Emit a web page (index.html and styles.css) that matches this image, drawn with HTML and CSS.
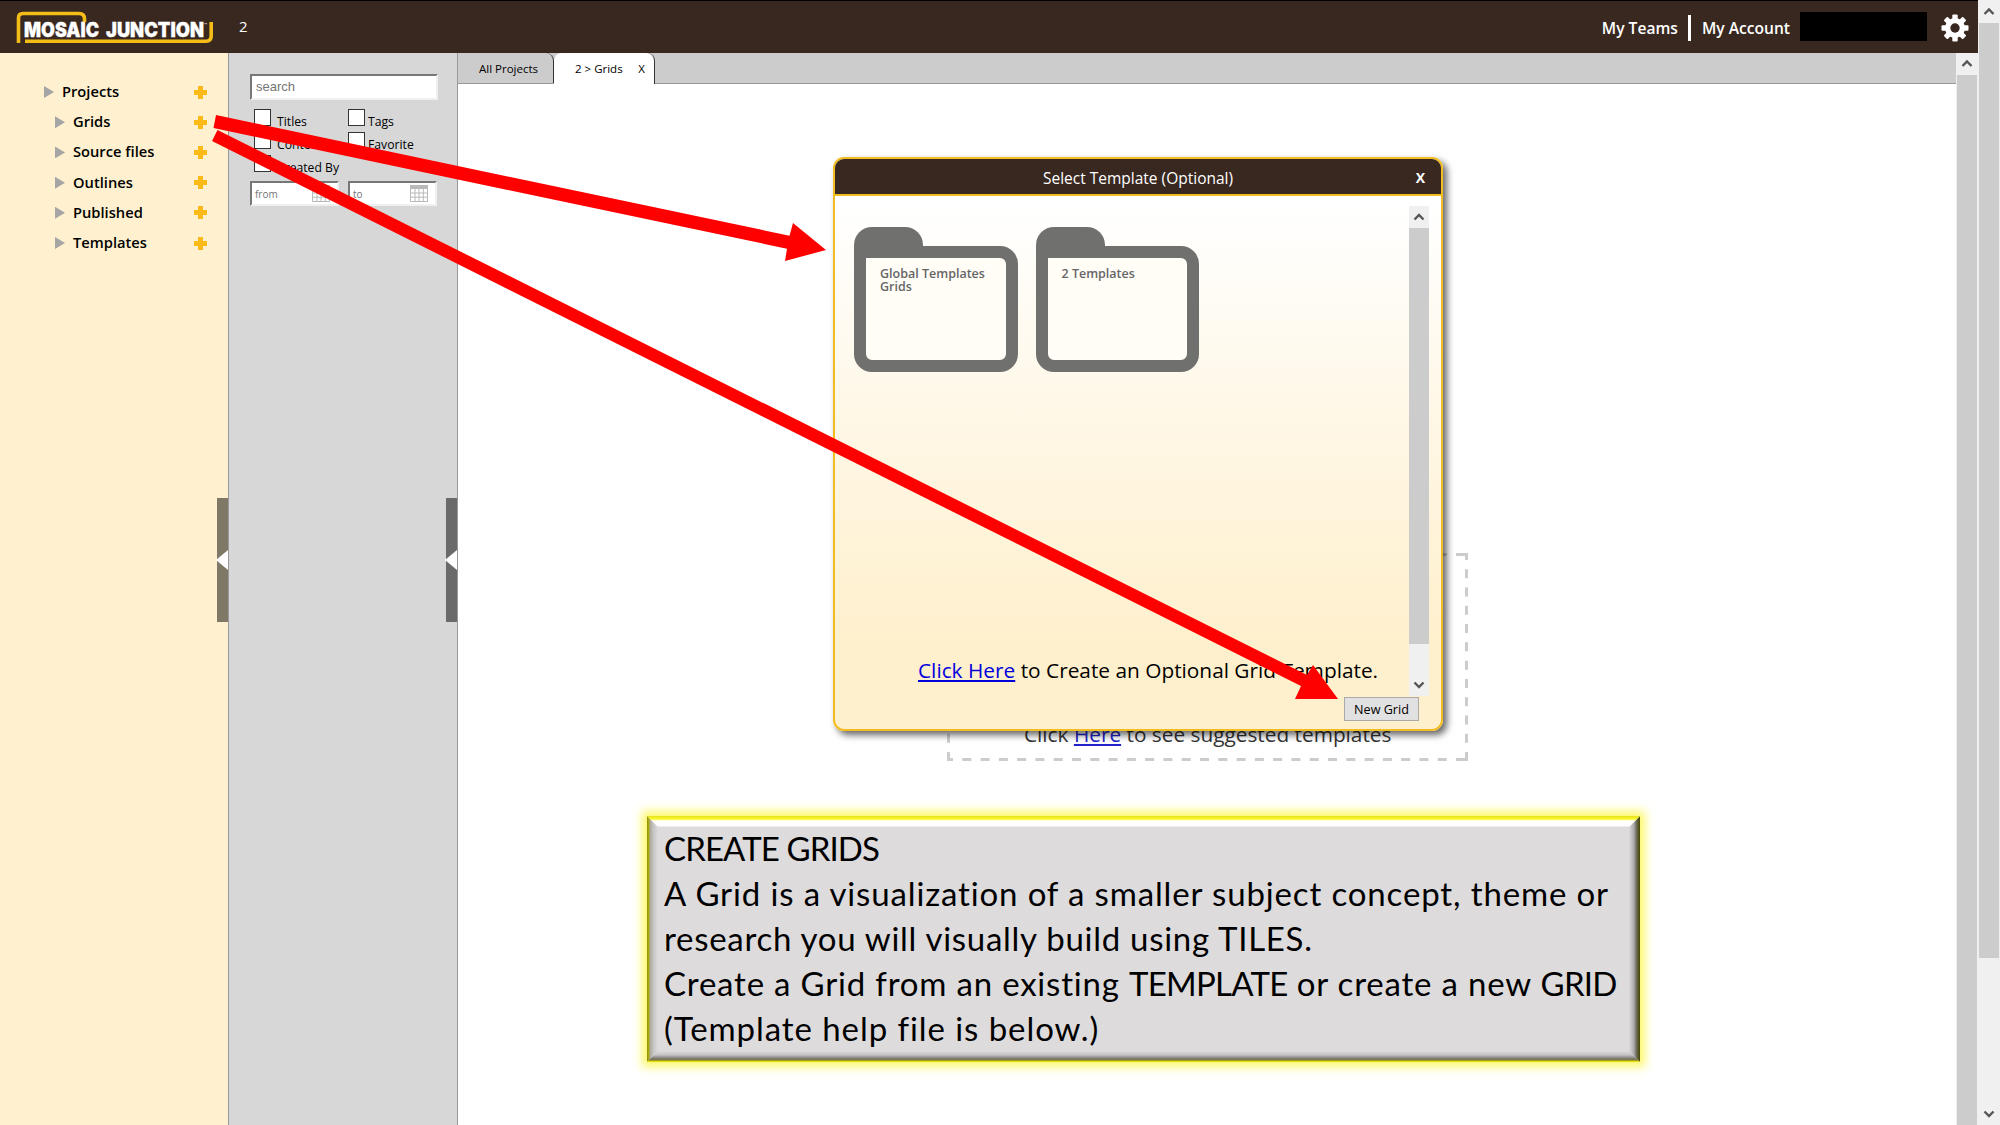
FILE: index.html
```html
<!DOCTYPE html>
<html lang="en">
<head>
<meta charset="utf-8">
<title>Mosaic Junction</title>
<link rel="stylesheet" href="styles.css">
</head>
<body>
<div class="screen">
  <div class="app">
    <header class="header">
      <svg class="logo" width="200" height="34" viewBox="14 10 200 34" role="img">
        <path d="M18.500 43V18Q18.500 13.500 23 13.500H79Q84.500 13.500 84.500 19V22" class="logo-line"/>
        <path d="M25 41.200H206Q211.200 41.200 211.200 36V22" class="logo-line"/>
        <text x="24" y="37" textLength="75" lengthAdjust="spacingAndGlyphs" class="logo-text">MOSAIC</text>
        <text x="106" y="37" textLength="98" lengthAdjust="spacingAndGlyphs" class="logo-text">JUNCTION</text>
        <text x="204" y="27" class="logo-tm">™</text>
      </svg>
      <span class="project">2</span>
      <nav class="account">
        <a class="teams">My Teams</a>
        <i class="divider"></i>
        <a class="acct">My Account</a>
        <i class="redacted"></i>
        <svg class="gear" width="28" height="28" viewBox="-14 -14 28 28">
          <g fill="#fff">
            <rect x="-2.700" y="-13.500" width="5.400" height="27" rx="1"/>
            <rect x="-2.700" y="-13.500" width="5.400" height="27" rx="1" transform="rotate(45)"/>
            <rect x="-2.700" y="-13.500" width="5.400" height="27" rx="1" transform="rotate(90)"/>
            <rect x="-2.700" y="-13.500" width="5.400" height="27" rx="1" transform="rotate(135)"/>
            <circle r="10"/>
          </g>
          <circle r="4.700" fill="#39281f"/>
        </svg>
      </nav>
    </header>
    <div class="body">
      <aside class="sidebar">
        <ul class="tree">
          <li class="root"><i class="tri"></i><span>Projects</span><i class="plus"></i></li>
          <li><i class="tri"></i><span>Grids</span><i class="plus"></i></li>
          <li><i class="tri"></i><span>Source files</span><i class="plus"></i></li>
          <li><i class="tri"></i><span>Outlines</span><i class="plus"></i></li>
          <li><i class="tri"></i><span>Published</span><i class="plus"></i></li>
          <li><i class="tri"></i><span>Templates</span><i class="plus"></i></li>
        </ul>
        <div class="handle"></div>
      </aside>
      <aside class="filters">
        <div class="field search">search</div>
        <div class="checks">
          <label><i class="box"></i>Titles</label><label class="right"><i class="box"></i>Tags</label>
          <label><i class="box"></i>Content</label><label class="right"><i class="box"></i>Favorite</label>
          <label><i class="box"></i>Created By</label>
        </div>
        <div class="dates">
          <div class="field date">from<svg width="18" height="17" viewBox="0 0 18 17"><path d="M.5 3V16.500H17.500V3M5 3V16M9 3V16M13.300 3V16M0 8H18M0 12.200H18" fill="none" stroke="#b9b9b9"/><path d="M0 0H18V4H0Z" fill="#b9b9b9"/></svg></div>
          <div class="field date">to<svg width="18" height="17" viewBox="0 0 18 17"><path d="M.5 3V16.500H17.500V3M5 3V16M9 3V16M13.300 3V16M0 8H18M0 12.200H18" fill="none" stroke="#b9b9b9"/><path d="M0 0H18V4H0Z" fill="#b9b9b9"/></svg></div>
        </div>
        <div class="handle dark"></div>
      </aside>
      <main class="main">
        <div class="tabs">
          <div class="tab first">All Projects</div>
          <div class="tab active"><span>2 &gt; Grids</span><span>X</span></div>
        </div>
        <div class="canvas">
          <section class="dropzone">
            <svg class="dashes" width="521" height="208" viewBox="0 0 521 208">
              <path d="M0 1.500H521M0 206.500H521" stroke-dasharray="9 9.286" stroke-dashoffset="3"/>
              <path d="M1.500 0V208M519.500 0V208" stroke-dasharray="9 9.273" stroke-dashoffset="2"/>
            </svg>
            <p>Click <a>Here</a> to see suggested templates</p>
          </section>
        </div>
      </main>
      <div class="vscroll inner"><svg viewBox="0 0 22 22"><path d="M6.500 13L11 8.500L15.500 13"/></svg><i class="thumb"></i></div>
    </div>
  </div>
  <div class="vscroll outer"><svg viewBox="0 0 22 22"><path d="M6.500 14L11 9.500L15.500 14"/></svg><i class="thumb"></i><svg class="down" viewBox="0 0 22 22"><path d="M6.500 8.500L11 13L15.500 8.500"/></svg></div>

  <div class="modal">
    <div class="modal-head"><span>Select Template (Optional)</span><b>X</b></div>
    <div class="modal-body">
      <div class="list">
        <div class="folders">
          <div class="folder"><i class="folder-tab"></i><div class="folder-card">Global Templates<br>Grids</div></div>
          <div class="folder"><i class="folder-tab"></i><div class="folder-card">2 Templates</div></div>
        </div>
        <p class="hint"><a>Click Here</a> to Create an Optional Grid Template.</p>
      </div>
      <div class="vscroll small"><svg viewBox="0 0 22 22"><path d="M6.500 13.500L11 9L15.500 13.500"/></svg><i class="thumb"></i><svg class="down" viewBox="0 0 22 22"><path d="M6.500 8.500L11 13L15.500 8.500"/></svg></div>
    </div>
    <div class="modal-foot"><div class="btn">New Grid</div></div>
  </div>

  <div class="callout">
    <i class="bevel left"></i><i class="bevel right"></i><i class="bevel top"></i><i class="bevel bottom"></i>
    <p class="l1">CREATE GRIDS</p>
    <p class="l2">A Grid is a visualization of a smaller subject concept, theme or</p>
    <p class="l3">research you will visually build using TILES.</p>
    <p class="l4">Create a Grid from an existing <span class="caps">TEMPLATE</span> or create a new <span class="caps">GRID</span></p>
    <p class="l5">(Template help file is below.)</p>
  </div>

  <svg class="arrows" width="2000" height="1125" viewBox="0 0 2000 1125">
    <path d="M216 115L789.500 235.700L793 223L826 250L785 261L787 248.700L213.500 128Z"/>
    <path d="M217.500 130L1307 675L1313 665L1338 699L1295 699L1301 686L212 141Z"/>
  </svg>
</div>
</body>
</html>
```

FILE: styles.css
```css
* { box-sizing: border-box; }
body { margin: 0; font-family: "Open Sans", "Noto Sans", sans-serif; color: #000; }
p, ul { margin: 0; padding: 0; list-style: none; }
a { text-decoration: none; }
.screen { position: relative; display: flex; width: 2000px; height: 1125px; overflow: hidden; background: #fff; }
.app { display: flex; flex-direction: column; width: 1978px; height: 1125px; }

.header { display: flex; align-items: flex-start; height: 53px; padding: 9px 9px 0 14px; background: #39281f; border-top: 1px solid #000; color: #fff; }
.logo { flex: none; }
.logo-line { fill: none; stroke: #f4bc17; stroke-width: 3.6; }
.logo-text { font: 900 19.500px "Inter", sans-serif; fill: #fff; stroke: #fff; stroke-width: .3; }
.logo-tm { font: 5px "Inter", sans-serif; fill: #fff; }
.project { margin: 5px 0 0 25px; font-size: 15px; line-height: 22px; }
.account { display: flex; align-items: center; margin-left: auto; height: 35px; font-size: 15.600px; font-weight: 600; }
.teams, .acct { padding-top: 1px; }
.divider { width: 3px; height: 26px; margin: 0 11px 0 10px; background: #fff; }
.redacted { width: 127px; height: 29px; margin: -3px 14px 0 10px; background: #000; }
.gear { flex: none; }

.body { display: flex; flex: 1; min-height: 0; }
.sidebar { position: relative; width: 229px; background: #fff1cf; border-right: 1px solid #999; }
.tree { padding-top: 24px; }
.tree li { display: flex; align-items: center; height: 30.2px; padding: 0 21px 0 55px; font-size: 14.700px; font-weight: 600; }
.tree li.root { padding-left: 44px; }
.tree span { padding-bottom: 2px; }
.tri { width: 10px; height: 12px; margin-right: 8px; background: #a5a5a5; clip-path: polygon(0 0, 100% 50%, 0 100%); }
.plus { width: 13px; height: 13px; margin-left: auto; background: linear-gradient(#fcba17, #fcba17) center / 5px 13px no-repeat, linear-gradient(#fcba17, #fcba17) center / 13px 5px no-repeat; }
.handle { position: absolute; right: 0; top: 445px; width: 11px; height: 124px; background: #807866; }
.handle::after { content: ""; position: absolute; right: 0; top: 52px; width: 12px; height: 20px; background: #fff; clip-path: polygon(100% 0, 0 50%, 100% 100%); }
.handle.dark { background: #6a6a6a; }

.filters { position: relative; width: 229px; padding: 21px 19px 0 21px; background: #d7d7d7; border-right: 1px solid #999; }
.field { display: flex; align-items: center; background: #fff; border: 2px solid #f0f0f0; border-top-color: #777; border-left-color: #777; color: #757575; font-family: "Liberation Sans", Arial, sans-serif; }
.search { width: 188px; height: 26px; padding: 0 0 1px 4px; font-size: 13px; }
.checks { display: grid; grid-template-columns: 94px 90px; grid-auto-rows: 23px; margin: 9px 0 0 4px; font-size: 12.200px; }
.checks label { display: flex; align-items: flex-start; gap: 6px; line-height: 25px; white-space: nowrap; }
.checks .right { gap: 3px; }
.box { width: 17px; height: 17px; background: #fff; border: 1px solid #333; }
.dates { display: flex; gap: 9px; margin-top: 3px; }
.date { width: 89px; height: 25px; padding: 0 7px 0 3px; font: 10px "Open Sans", sans-serif; justify-content: space-between; }

.main { display: flex; flex-direction: column; width: 1498px; }
.tabs { display: flex; height: 31px; background: #ccc; border-bottom: 1px solid #999; font-size: 11.5px; }
.tab { display: flex; align-items: center; height: 30px; padding-top: 1px; border-right: 1px solid #333; border-radius: 0 8px 0 0; }
.tab.first { width: 96px; padding-left: 21px; }
.tab.active { width: 101px; height: 31px; padding: 0 9px 0 21px; justify-content: space-between; background: #fff; border-radius: 8px 8px 0 0; }
.canvas { flex: 1; padding: 469px 0 0 489px; }
.dropzone { position: relative; width: 521px; height: 208px; padding: 164px 0 0 77px; color: #333; font-size: 20.800px; line-height: 34px; white-space: nowrap; }
.dashes { position: absolute; left: 0; top: 0; fill: none; stroke: #ccc; stroke-width: 3; }
.dropzone a { color: #22c; text-decoration: underline; }

.vscroll { display: flex; flex-direction: column; align-items: center; width: 22px; background: #f0f0f0; }
.vscroll svg { flex: none; width: 22px; height: 22px; fill: none; stroke: #555; stroke-width: 2.4; }
.thumb { width: 20px; background: #ccc; }
.inner .thumb { flex: 1; }
.outer .thumb { height: 935px; margin-top: 1px; }
.vscroll .down { margin-top: auto; }

.modal { position: absolute; left: 833px; top: 157px; width: 610px; height: 574px; display: flex; flex-direction: column; border: 2px solid #f2bd22; border-radius: 11px; background: linear-gradient(#fff 8%, #fff0cd 85%); box-shadow: 4px 4px 7px rgba(0,0,0,.6); overflow: hidden; }
.modal-head { position: relative; display: flex; align-items: center; justify-content: center; height: 37px; padding-top: 2px; border-bottom: 2px solid #f2bd22; background: #39281f; color: #fff; font-size: 15.500px; }
.modal-head b { position: absolute; right: 16px; top: 9px; font-size: 14px; }
.modal-body { display: flex; height: 500px; padding: 10px 12px 0 19px; }
.list { flex: 1; display: flex; flex-direction: column; justify-content: space-between; }
.folders { display: flex; gap: 18px; padding-top: 21px; }
.folder { width: 163.500px; height: 145px; }
.folder-tab { display: block; width: 69px; height: 36px; margin-bottom: -17px; background: #70706e; border-radius: 18px 18px 0 0; }
.folder-card { height: 126px; border: 12px solid #70706e; border-radius: 0 18px 18px 18px; padding: 10px 0 0 14px; background: #fffdf6; color: #666; font-size: 12.500px; font-weight: 600; line-height: 12.500px; white-space: nowrap; }
.hint { padding: 0 0 12px 64px; font-size: 20.830px; line-height: 28px; white-space: nowrap; }
.hint a { color: #00d; text-decoration: underline; }
.small { width: 20px; height: 490px; }
.small .thumb { height: 416px; }
.modal-foot { display: flex; justify-content: flex-end; padding: 1px 22px 0; }
.btn { width: 75px; height: 24px; border: 1px solid #aaa; background: #e1e1e1; font-size: 12.600px; line-height: 23px; text-align: center; }

.callout { position: absolute; left: 647px; top: 816px; width: 993px; height: 246px; padding: 10px 0 0 17px; background: #dddbdc; font: 33px/45px "Lato", "Carlito", sans-serif; font-variant-ligatures: none; white-space: nowrap; box-shadow: 0 0 9px 5px #fdf86b; }
.callout p { position: relative; }
.bevel { position: absolute; }
.top { left: 0; right: 0; top: 0; height: 11px; background: linear-gradient(#e6e21c, #fbf82c 3px, #fff 5px, #fff 10px, #dddbdc); clip-path: polygon(0 0, 100% 0, calc(100% - 11px) 100%, 11px 100%); }
.bottom { left: 0; right: 0; bottom: 0; height: 11px; background: linear-gradient(#dddbdc, #c4c2c3 4px, #85827e 7px, #75723f 9px, #d8d400 10px, #e8e420); clip-path: polygon(11px 0, calc(100% - 11px) 0, 100% 100%, 0 100%); }
.left { left: 0; top: 0; bottom: 0; width: 11px; background: linear-gradient(90deg, #8f8d00, #b0ae18 2px, #aaa894 3px, #c4c2c2 6px, #dddbdc); clip-path: polygon(0 0, 100% 11px, 100% calc(100% - 11px), 0 100%); }
.right.bevel { right: 0; top: 0; bottom: 0; width: 11px; background: linear-gradient(90deg, #dddbdc, #aaa8a9 5px, #777470 7px, #5b5a22 9px, #45440a); clip-path: polygon(0 11px, 100% 0, 100% 100%, 0 calc(100% - 11px)); }
.l1 { letter-spacing: -.9px; }
.l2 { letter-spacing: .86px; }
.l3 { letter-spacing: .72px; }
.l4 { letter-spacing: .8px; }
.l4 .caps { letter-spacing: -.75px; }
.l5 { letter-spacing: .93px; }

.arrows { position: absolute; left: 0; top: 0; fill: #f00; }
```
